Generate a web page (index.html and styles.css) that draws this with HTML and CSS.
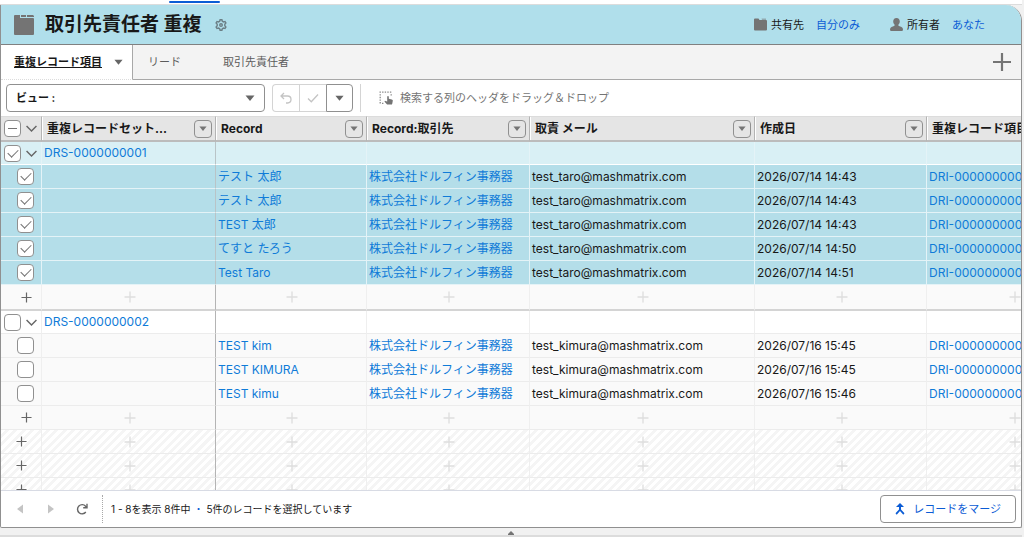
FILE: index.html
```html
<!DOCTYPE html>
<html lang="ja">

<head>
    <meta charset="utf-8"/>
    <title>取引先責任者 重複</title>
    <link rel="stylesheet" href="styles.css">
</head>

<body>
<svg class="sprite" aria-hidden="true">
    <symbol id="plus" viewBox="0 0 12 12"><path d="M6 0.5V11.5M0.5 6H11.5" fill="none" stroke="currentColor" stroke-width="1.3"/></symbol>
    <symbol id="caret" viewBox="0 0 10 6"><path d="M0.5 0.5h9L5 6z" fill="currentColor"/></symbol>
    <symbol id="chevron" viewBox="0 0 10 6"><path d="M0.5 0.7L5 5.2L9.5 0.7" fill="none" stroke="currentColor" stroke-width="1.3"/></symbol>
</svg>
<div class="page-top"><span class="page-tab"></span></div>
<main class="panel">
    <header class="header">
        <svg class="header-icon" viewBox="0 0 20 20"><path d="M1 0h5v3h13q1 0 1 1v15q0 1-1 1H1q-1 0-1-1V1q0-1 1-1zM7 0h5v2H7zM13 0h6l1 1v1h-7z" fill="#747474"/></svg>
        <h1>取引先責任者 重複</h1>
        <button class="gear" aria-label="設定">
            <svg viewBox="0 0 12 12" fill="none" stroke="#6c7f86"><path d="M4.7 2.2L5.1 0.7H6.9L7.3 2.2L8.5 2.9L10 2.5L10.9 4L9.8 5.2V6.8L10.9 8L10 9.5L8.5 9.1L7.3 9.8L6.9 11.3H5.1L4.7 9.8L3.5 9.1L2 9.5L1.1 8L2.2 6.8V5.2L1.1 4L2 2.5L3.5 2.9z" stroke-width="1.4"/><circle cx="6" cy="6" r="1.3" stroke-width="1.4"/></svg>
        </button>
        <div class="owner">
            <svg class="owner-icon" viewBox="0 0 13 12"><path d="M1 0h3.5l1 1.5H12q1 0 1 1V11q0 1-1 1H1q-1 0-1-1V1q0-1 1-1z" fill="#747474"/><path d="M7.5 0.3H12V1H8z" fill="#747474"/></svg>
            <span>共有先</span>
            <a href="#">自分のみ</a>
        </div>
        <div class="owner">
            <svg class="owner-icon" viewBox="0 0 13 13"><path d="M6.5 0C8.7 0 9.8 1.6 9.8 3.5C9.8 5 9 6 8.4 6.7Q8 7.6 9 8L11.5 9Q13 9.7 13 11.5Q13 13 11.8 13H1.2Q0 13 0 11.5Q0 9.7 1.5 9L4 8Q5 7.6 4.6 6.7C4 6 3.2 5 3.2 3.5C3.2 1.6 4.3 0 6.5 0z" fill="#747474"/></svg>
            <span>所有者</span>
            <a href="#">あなた</a>
        </div>
    </header>

    <nav class="tabs">
        <a href="#" class="tab active"><span>重複レコード項目</span><svg class="caret"><use href="#caret"/></svg></a>
        <a href="#" class="tab">リード</a>
        <a href="#" class="tab last">取引先責任者</a>
        <button class="tab-add" aria-label="タブを追加">
            <svg viewBox="0 0 18 18"><path d="M9 0V18M0 9H18" stroke="#747474" stroke-width="2.2"/></svg>
        </button>
    </nav>

    <div class="toolbar">
        <div class="view">
            <select aria-label="ビュー">
                <option>ビュー :</option>
            </select>
            <svg class="caret"><use href="#caret"/></svg>
        </div>
        <div class="group">
            <button disabled aria-label="元に戻す">
                <svg viewBox="0 0 12 12"><path d="M4 1L1 4L4 7M1 4H7.5Q11 4 11 7.5Q11 10.8 7.5 11H6" fill="none" stroke="#c4c4c4" stroke-width="1.3"/></svg>
            </button>
            <button disabled aria-label="保存">
                <svg viewBox="0 0 12 12"><path d="M1 6.5L4.3 9.8L11 2.5" fill="none" stroke="#c4c4c4" stroke-width="1.3"/></svg>
            </button>
            <button class="more" aria-label="その他">
                <svg class="caret"><use href="#caret"/></svg>
            </button>
        </div>
        <div class="search">
            <svg class="drag" viewBox="0 0 14 14"><path d="M0.5 1.2H13M1.200 3.2V13M12.2 3.2V5M3 12.3H5.500" fill="none" stroke="#8a8a8a" stroke-width="1.3" stroke-dasharray="1.4 1.2"/><path d="M8.200 6q0-1 .8-1t.8 1v1.800l3 .6q1.200.3 1 1.400l-.5 2.600q-.2 1.200-1.200 1.200H8.600q-.6 0-1-.5L5.600 10.700q-.2-1 .8-.8l1.800.7z" fill="#747474"/></svg>
            <span>検索する列のヘッダをドラッグ＆ドロップ</span>
        </div>
    </div>

    <div class="grid">
        <table>
            <colgroup>
                <col class="col-check">
                <col class="col-set">
                <col class="col-record">
                <col class="col-account">
                <col class="col-mail">
                <col class="col-date">
                <col class="col-item">
            </colgroup>
            <thead>
            <tr>
                <th><div class="pick"><input type="checkbox" class="some" aria-label="すべて選択"><svg class="chevron"><use href="#chevron"/></svg></div></th>
                <th><div class="head"><span>重複レコードセット...</span><button aria-label="列メニュー"><svg><use href="#caret"/></svg></button></div></th>
                <th><div class="head"><span>Record</span><button aria-label="列メニュー"><svg><use href="#caret"/></svg></button></div></th>
                <th><div class="head"><span>Record:取引先</span><button aria-label="列メニュー"><svg><use href="#caret"/></svg></button></div></th>
                <th><div class="head"><span>取責 メール</span><button aria-label="列メニュー"><svg><use href="#caret"/></svg></button></div></th>
                <th><div class="head"><span>作成日</span><button aria-label="列メニュー"><svg><use href="#caret"/></svg></button></div></th>
                <th><div class="head"><span>重複レコード項目</span></div></th>
            </tr>
            </thead>
            <tbody>
            <tr class="set selected">
                <td><div class="pick"><input type="checkbox" checked aria-label="DRS-0000000001"><svg class="chevron"><use href="#chevron"/></svg></div></td>
                <td><a href="#">DRS-0000000001</a></td>
                <td></td>
                <td></td>
                <td></td>
                <td></td>
                <td></td>
            </tr>
            <tr class="selected">
                <td><div class="pick child"><input type="checkbox" checked aria-label="選択"></div></td>
                <td></td>
                <td><a href="#">テスト 太郎</a></td>
                <td><a href="#">株式会社ドルフィン事務器</a></td>
                <td>test_taro@mashmatrix.com</td>
                <td>2026/07/14 14:43</td>
                <td><a href="#">DRI-0000000001</a></td>
            </tr>
            <tr class="selected">
                <td><div class="pick child"><input type="checkbox" checked aria-label="選択"></div></td>
                <td></td>
                <td><a href="#">テスト 太郎</a></td>
                <td><a href="#">株式会社ドルフィン事務器</a></td>
                <td>test_taro@mashmatrix.com</td>
                <td>2026/07/14 14:43</td>
                <td><a href="#">DRI-0000000002</a></td>
            </tr>
            <tr class="selected">
                <td><div class="pick child"><input type="checkbox" checked aria-label="選択"></div></td>
                <td></td>
                <td><a href="#">TEST 太郎</a></td>
                <td><a href="#">株式会社ドルフィン事務器</a></td>
                <td>test_taro@mashmatrix.com</td>
                <td>2026/07/14 14:43</td>
                <td><a href="#">DRI-0000000003</a></td>
            </tr>
            <tr class="selected">
                <td><div class="pick child"><input type="checkbox" checked aria-label="選択"></div></td>
                <td></td>
                <td><a href="#">てすと たろう</a></td>
                <td><a href="#">株式会社ドルフィン事務器</a></td>
                <td>test_taro@mashmatrix.com</td>
                <td>2026/07/14 14:50</td>
                <td><a href="#">DRI-0000000004</a></td>
            </tr>
            <tr class="selected">
                <td><div class="pick child"><input type="checkbox" checked aria-label="選択"></div></td>
                <td></td>
                <td><a href="#">Test Taro</a></td>
                <td><a href="#">株式会社ドルフィン事務器</a></td>
                <td>test_taro@mashmatrix.com</td>
                <td>2026/07/14 14:51</td>
                <td><a href="#">DRI-0000000005</a></td>
            </tr>
            <tr class="add set-end">
                <td><button class="child" aria-label="行を追加"><svg><use href="#plus"/></svg></button></td>
                <td><svg><use href="#plus"/></svg></td>
                <td><svg><use href="#plus"/></svg></td>
                <td><svg><use href="#plus"/></svg></td>
                <td><svg><use href="#plus"/></svg></td>
                <td><svg><use href="#plus"/></svg></td>
                <td><svg><use href="#plus"/></svg></td>
            </tr>
            <tr class="set">
                <td><div class="pick"><input type="checkbox" aria-label="DRS-0000000002"><svg class="chevron"><use href="#chevron"/></svg></div></td>
                <td><a href="#">DRS-0000000002</a></td>
                <td></td>
                <td></td>
                <td></td>
                <td></td>
                <td></td>
            </tr>
            <tr>
                <td><div class="pick child"><input type="checkbox" aria-label="選択"></div></td>
                <td></td>
                <td><a href="#">TEST kim</a></td>
                <td><a href="#">株式会社ドルフィン事務器</a></td>
                <td>test_kimura@mashmatrix.com</td>
                <td>2026/07/16 15:45</td>
                <td><a href="#">DRI-0000000006</a></td>
            </tr>
            <tr>
                <td><div class="pick child"><input type="checkbox" aria-label="選択"></div></td>
                <td></td>
                <td><a href="#">TEST KIMURA</a></td>
                <td><a href="#">株式会社ドルフィン事務器</a></td>
                <td>test_kimura@mashmatrix.com</td>
                <td>2026/07/16 15:45</td>
                <td><a href="#">DRI-0000000007</a></td>
            </tr>
            <tr>
                <td><div class="pick child"><input type="checkbox" aria-label="選択"></div></td>
                <td></td>
                <td><a href="#">TEST kimu</a></td>
                <td><a href="#">株式会社ドルフィン事務器</a></td>
                <td>test_kimura@mashmatrix.com</td>
                <td>2026/07/16 15:46</td>
                <td><a href="#">DRI-0000000008</a></td>
            </tr>
            <tr class="add">
                <td><button class="child" aria-label="行を追加"><svg><use href="#plus"/></svg></button></td>
                <td><svg><use href="#plus"/></svg></td>
                <td><svg><use href="#plus"/></svg></td>
                <td><svg><use href="#plus"/></svg></td>
                <td><svg><use href="#plus"/></svg></td>
                <td><svg><use href="#plus"/></svg></td>
                <td><svg><use href="#plus"/></svg></td>
            </tr>
            </tbody>
            <tbody class="blank">
            <tr class="add">
                <td><button aria-label="行を追加"><svg><use href="#plus"/></svg></button></td>
                <td><svg><use href="#plus"/></svg></td>
                <td><svg><use href="#plus"/></svg></td>
                <td><svg><use href="#plus"/></svg></td>
                <td><svg><use href="#plus"/></svg></td>
                <td><svg><use href="#plus"/></svg></td>
                <td><svg><use href="#plus"/></svg></td>
            </tr>
            <tr class="add">
                <td><button aria-label="行を追加"><svg><use href="#plus"/></svg></button></td>
                <td><svg><use href="#plus"/></svg></td>
                <td><svg><use href="#plus"/></svg></td>
                <td><svg><use href="#plus"/></svg></td>
                <td><svg><use href="#plus"/></svg></td>
                <td><svg><use href="#plus"/></svg></td>
                <td><svg><use href="#plus"/></svg></td>
            </tr>
            <tr class="add">
                <td><button aria-label="行を追加"><svg><use href="#plus"/></svg></button></td>
                <td><svg><use href="#plus"/></svg></td>
                <td><svg><use href="#plus"/></svg></td>
                <td><svg><use href="#plus"/></svg></td>
                <td><svg><use href="#plus"/></svg></td>
                <td><svg><use href="#plus"/></svg></td>
                <td><svg><use href="#plus"/></svg></td>
            </tr>
            </tbody>
        </table>
    </div>

    <footer class="footer">
        <div class="pager">
            <button disabled aria-label="前へ"><svg viewBox="0 0 12 12"><path d="M9 1.500V10.500L3 6z" fill="#c4c4c4"/></svg></button>
            <button disabled aria-label="次へ"><svg viewBox="0 0 12 12"><path d="M3 1.500V10.500L9 6z" fill="#c4c4c4"/></svg></button>
            <button aria-label="更新"><svg viewBox="0 0 12 12"><path d="M9.8 9A4.6 4.6 0 1 1 9.6 3.2L10.8 4.5M11 0.8V4.7H7.2" fill="none" stroke="#666" stroke-width="1.4"/></svg></button>
        </div>
        <p>1 - 8を表示 8件中<span class="dot">・</span>5件のレコードを選択しています</p>
        <button class="merge">
            <svg viewBox="0 0 10 12"><path d="M5 0L9 4H6V6.5L9.5 10.3L8.3 11.7L5 8L1.7 11.7L0.5 10.3L4 6.5V4H1z" fill="#0b5cd5"/></svg>
            レコードをマージ
        </button>
    </footer>
</main>
<div class="splitter"><svg viewBox="0 0 6 4"><path d="M0 4V3L3 0L6 3V4z" fill="#747474"/></svg></div>
</body>
</html>
```

FILE: styles.css
```css
* {
    box-sizing: border-box;
    padding: 0;
    margin: 0;
}

body {
    display: flex;
    flex-direction: column;
    height: 100vh;
    padding-right: 2px;
    overflow: hidden;
    background: #f1f1f1;
    color: #181818;
    font: 11px/16px Inter, "Noto Sans CJK JP", sans-serif;
}

a {
    color: #0b5cd5;
    text-decoration: none;
}

button {
    display: flex;
    align-items: center;
    justify-content: center;
    border: none;
    background: none;
    color: inherit;
    font: inherit;
}

svg {
    display: block;
    flex: none;
}

.sprite {
    position: absolute;
    width: 0;
    height: 0;
}

.caret {
    width: 10px;
    height: 6px;
    color: #666;
}

.page-top {
    flex: none;
    height: 5px;
    padding: 1px 0 0 169px;
    background: white;
    border-bottom: 1px solid #dcdcdc;
}

.page-tab {
    display: block;
    width: 51px;
    height: 2px;
    border-radius: 1px;
    background: #0b5cd5;
}

.panel {
    display: flex;
    flex: 1;
    flex-direction: column;
    min-height: 0;
    overflow: hidden;
    background: white;
    border: 1px solid #909090;
    border-top: none;
    border-radius: 0 16px 2px 2px;
}

/* ヘッダ */
.header {
    display: flex;
    flex: none;
    align-items: center;
    height: 40px;
    padding: 0 36px 0 13px;
    background: #b0dfeb;
    border-bottom: 1px solid #808080;
}

.header-icon {
    width: 20px;
    height: 20px;
}

h1 {
    margin-left: 11px;
    font-size: 19px;
    line-height: 28px;
}

.gear {
    margin: 0 auto 0 13px;
}

.gear svg {
    width: 12px;
    height: 12px;
}

.owner {
    display: flex;
    align-items: center;
    margin-left: 30px;
}

.owner-icon {
    width: 13px;
    height: 13px;
    margin-right: 4px;
}

.owner a {
    margin-left: 12px;
}

/* タブ */
.tabs {
    display: flex;
    flex: none;
    height: 35px;
    background: #f3f3f3;
}

.tab {
    display: flex;
    align-items: center;
    padding: 0 15px;
    border-bottom: 1px solid #a8a8a8;
    color: #5c5c5c;
}

.tab.active {
    padding: 0 9px 0 13px;
    background: white;
    border-right: 1px solid #a8a8a8;
    border-bottom: 1px dotted #dcdcdc;
    color: #181818;
    font-weight: bold;
    text-decoration: underline;
}

.tab.active .caret {
    width: 9px;
    margin-left: 12px;
}

.tab.last {
    flex: 1;
    padding-left: 27px;
}

.tab-add {
    padding: 0 10px;
    border-bottom: 1px solid #a8a8a8;
}

.tab-add svg {
    width: 18px;
    height: 18px;
}

/* ツールバー */
.toolbar {
    display: flex;
    flex: none;
    align-items: center;
    height: 36px;
    padding-left: 5px;
}

.view {
    display: grid;
    align-items: center;
    width: 259px;
}

.view select,
.view .caret {
    grid-area: 1 / 1;
}

.view select {
    height: 28px;
    padding: 0 9px;
    appearance: none;
    background: white;
    border: 1px solid #909090;
    border-radius: 4px;
    color: #181818;
    font: inherit;
    font-weight: bold;
}

.view .caret {
    justify-self: end;
    margin-right: 10px;
    pointer-events: none;
}

.group {
    display: flex;
    margin-left: 7px;
}

.group button {
    width: 27px;
    height: 28px;
    border: 1px solid #d4d4d4;
    border-right: none;
}

.group button:first-child {
    border-radius: 4px 0 0 4px;
}

.group .more {
    border: 1px solid #909090;
    border-radius: 0 4px 4px 0;
}

.group svg {
    width: 12px;
    height: 12px;
}

.group .caret {
    width: 9px;
    height: 6px;
}

.search {
    display: flex;
    align-items: center;
    height: 28px;
    margin-left: 7px;
    padding-left: 18px;
    border-left: 1px solid #d4d4d4;
    color: #747474;
}

.drag {
    width: 14px;
    height: 14px;
    margin-right: 7px;
}

/* 表 */
.grid {
    flex: 1;
    min-height: 0;
    overflow: hidden;
    border-bottom: 1px solid #d8dbe4;
}

table {
    width: 1100px;
    table-layout: fixed;
    border-collapse: separate;
    border-spacing: 0;
    font-size: 12px;
}

.col-check {
    width: 41px;
}

.col-set {
    width: 174px;
}

.col-record {
    width: 151px;
}

.col-account {
    width: 163px;
}

.col-mail {
    width: 225px;
}

.col-date {
    width: 172px;
}

th {
    height: 26px;
    background: #e5e5e5;
    border-top: 1px solid #dcdcdc;
    border-right: 1px solid #b4b4b4;
    border-bottom: 2px solid #bcbcbc;
    box-shadow: inset 1px 0 white;
    text-align: left;
    white-space: nowrap;
}

th:first-child {
    box-shadow: none;
}

td {
    height: 24px;
    padding-left: 2px;
    background: #fafafa;
    border-right: 1px solid #efefef;
    border-bottom: 1px solid #ececec;
    white-space: nowrap;
}

td:first-child {
    padding: 0;
}

td:nth-child(2) {
    border-right-color: #b4b4b4;
}

td a {
    color: #0f7bd8;
}

.set td {
    height: 23px;
    background: white;
}

.selected td {
    background: #b4dee9;
    border-color: #e4f3f7;
}

.selected td:nth-child(2) {
    border-right-color: #b9c4c7;
}

.set.selected td {
    background: #d9f0f5;
    border-bottom-color: white;
}

.set-end td {
    height: 26px;
    border-bottom: 2px solid #d4d4d4;
}

.head {
    display: flex;
    align-items: center;
    justify-content: space-between;
    padding: 0 3px 0 5px;
}

.head button {
    width: 18px;
    height: 18px;
    border: 1px solid #909090;
    border-radius: 4px;
    color: #747474;
}

.head svg {
    width: 8px;
    height: 5px;
}

.pick {
    display: flex;
    align-items: center;
    padding-left: 3px;
}

.pick.child {
    padding-left: 16px;
}

.pick input {
    display: grid;
    place-items: center;
    width: 17px;
    height: 17px;
    appearance: none;
    background: white;
    border: 1px solid #909090;
    border-radius: 4px;
}

.pick input:checked::after {
    content: "";
    width: 9px;
    height: 5px;
    margin-bottom: 3px;
    border: solid #747474;
    border-width: 0 0 1px 1px;
    transform: rotate(-45deg);
}

.pick .some::after {
    content: "";
    width: 9px;
    height: 1px;
    background: #747474;
}

.chevron {
    width: 11px;
    height: 7px;
    margin-left: 5px;
    color: #666;
}

.add td {
    color: #dedede;
}

.add svg {
    width: 12px;
    height: 12px;
    margin: 0 auto;
}

.add button {
    padding-left: 15px;
    color: #666;
}

.add button svg {
    width: 11px;
    height: 11px;
}

.add .child {
    padding-left: 20px;
}

.blank td {
    background: repeating-linear-gradient(135deg, white 0 3px, #f5f5f5 3px 6px);
}

/* フッタ */
.footer {
    display: flex;
    flex: none;
    align-items: center;
    height: 36px;
    padding: 0 5px 0 13px;
}

.pager {
    display: flex;
    align-items: center;
    gap: 19px;
    height: 28px;
    padding-right: 14px;
    border-right: 1px dotted #a8a8a8;
}

.pager svg {
    width: 12px;
    height: 12px;
}

.footer p {
    margin-left: 8px;
    font-size: 10px;
}

.dot {
    margin: 0 3px;
    color: #0b5cd5;
}

.merge {
    gap: 8px;
    height: 28px;
    margin-left: auto;
    padding: 0 14px;
    border: 1px solid #909090;
    border-radius: 4px;
    color: #0b5cd5;
}

.merge svg {
    width: 10px;
    height: 12px;
}

.splitter {
    display: flex;
    flex: none;
    justify-content: center;
    height: 9px;
    padding-top: 3px;
    border-bottom: 2px solid #dcdcdc;
}

.splitter svg {
    width: 6px;
    height: 4px;
}
```
